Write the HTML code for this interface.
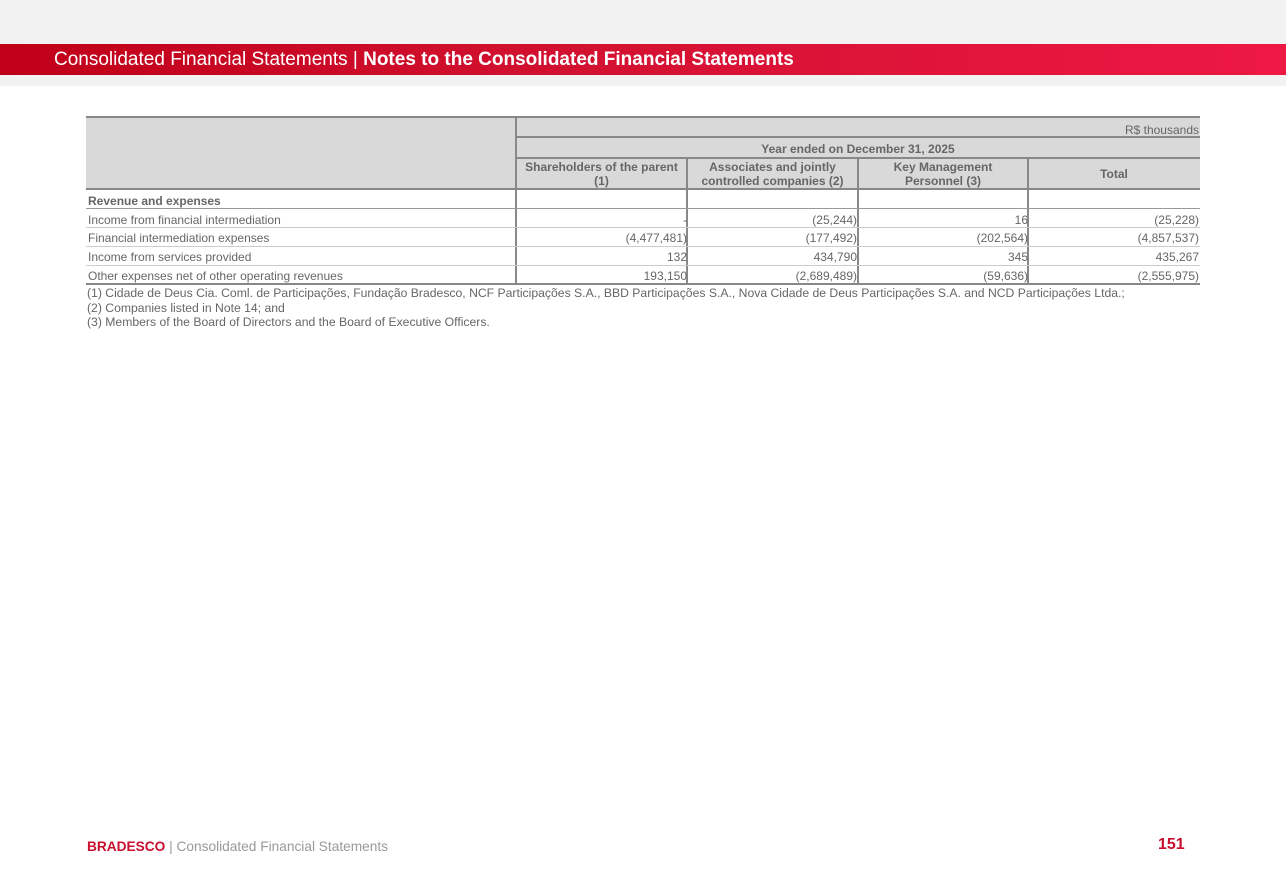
<!DOCTYPE html>
<html><head><meta charset="utf-8"><style>
*{margin:0;padding:0;box-sizing:border-box}
body{width:1286px;height:894px;background:#fff;font-family:"Liberation Sans",sans-serif;color:#666;position:relative;overflow:hidden}
.top{position:absolute;left:0;top:0;width:1286px;height:86px;background:#f2f2f2}
.band{position:absolute;left:0;top:44px;width:1286px;height:31px;background:linear-gradient(90deg,#c00018,#d0102e 40%,#ee1845);color:#fff;font-size:19px;line-height:31px;padding-left:54px}
.a{position:absolute;font-size:12px;line-height:19px;white-space:nowrap}
.r{text-align:right}
.c{text-align:center}
.b{font-weight:bold}
.hl{position:absolute;background:#888;height:2px}
.vl{position:absolute;background:#888;width:2px}
.gl{position:absolute;background:#ccc;height:1px}
</style></head><body>
<div class="top"></div>
<div class="band">Consolidated Financial Statements | <b>Notes to the Consolidated Financial Statements</b></div>

<div style="position:absolute;left:86px;top:117px;width:1114px;height:72px;background:#d9d9d9"></div>
<div class="hl" style="left:86px;top:116px;width:1114px"></div>
<div class="hl" style="left:516px;top:136px;width:684px"></div>
<div class="hl" style="left:516px;top:157px;width:684px"></div>
<div class="hl" style="left:86px;top:188px;width:1114px"></div>
<div class="hl" style="left:86px;top:283px;width:1114px"></div>
<div class="vl" style="left:515px;top:117px;height:168px"></div>
<div class="vl" style="left:686px;top:158px;height:127px"></div>
<div class="vl" style="left:857px;top:158px;height:127px"></div>
<div class="vl" style="left:1027px;top:158px;height:127px"></div>
<div class="gl" style="left:86px;top:208px;width:1114px;background:#999"></div>
<div class="gl" style="left:86px;top:227px;width:1114px"></div>
<div class="gl" style="left:86px;top:246px;width:1114px"></div>
<div class="gl" style="left:86px;top:265px;width:1114px"></div>

<div class="a r" style="left:1000px;top:121px;width:199px">R$ thousands</div>
<div class="a c b" style="left:516px;top:140px;width:684px">Year ended on December 31, 2025</div>
<div class="a c b" style="left:516px;top:160px;width:171px;line-height:14px">Shareholders of the parent<br>(1)</div>
<div class="a c b" style="left:687px;top:160px;width:171px;line-height:14px">Associates and jointly<br>controlled companies (2)</div>
<div class="a c b" style="left:858px;top:160px;width:170px;line-height:14px">Key Management<br>Personnel (3)</div>
<div class="a c b" style="left:1028px;top:165px;width:172px">Total</div>

<div class="a b" style="left:88px;top:192px">Revenue and expenses</div>
<div class="a" style="left:88px;top:211px">Income from financial intermediation</div>
<div class="a" style="left:88px;top:229px">Financial intermediation expenses</div>
<div class="a" style="left:88px;top:248px">Income from services provided</div>
<div class="a" style="left:88px;top:267px">Other expenses net of other operating revenues</div>

<div class="a r" style="left:516px;top:211px;width:171px">-</div>
<div class="a r" style="left:687px;top:211px;width:170px">(25,244)</div>
<div class="a r" style="left:858px;top:211px;width:170px">16</div>
<div class="a r" style="left:1028px;top:211px;width:171px">(25,228)</div>

<div class="a r" style="left:516px;top:229px;width:171px">(4,477,481)</div>
<div class="a r" style="left:687px;top:229px;width:170px">(177,492)</div>
<div class="a r" style="left:858px;top:229px;width:170px">(202,564)</div>
<div class="a r" style="left:1028px;top:229px;width:171px">(4,857,537)</div>

<div class="a r" style="left:516px;top:248px;width:171px">132</div>
<div class="a r" style="left:687px;top:248px;width:170px">434,790</div>
<div class="a r" style="left:858px;top:248px;width:170px">345</div>
<div class="a r" style="left:1028px;top:248px;width:171px">435,267</div>

<div class="a r" style="left:516px;top:267px;width:171px">193,150</div>
<div class="a r" style="left:687px;top:267px;width:170px">(2,689,489)</div>
<div class="a r" style="left:858px;top:267px;width:170px">(59,636)</div>
<div class="a r" style="left:1028px;top:267px;width:171px">(2,555,975)</div>

<div class="a" style="left:87px;top:286px;line-height:14.5px;font-size:12.2px">(1) Cidade de Deus Cia. Coml. de Participações, Fundação Bradesco, NCF Participações S.A., BBD Participações S.A., Nova Cidade de Deus Participações S.A. and NCD Participações Ltda.;<br>(2) Companies listed in Note 14; and<br>(3) Members of the Board of Directors and the Board of Executive Officers.</div>

<div class="a" style="left:87px;top:837px;font-size:13.7px;color:#999"><b style="color:#c8102e">BRADESCO</b> | Consolidated Financial Statements</div>
<div class="a b" style="left:1158px;top:835px;font-size:16px;color:#c8102e">151</div>
</body></html>
